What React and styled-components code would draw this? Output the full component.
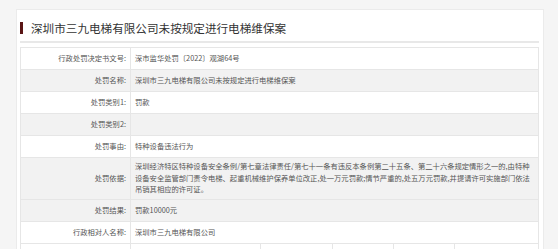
import React from 'react';
import styled, { createGlobalStyle } from 'styled-components';

const GlobalStyle = createGlobalStyle`
    body {
        margin: 0;
        background: #f5f5f5;
        font-family: "Noto Sans CJK SC", "Noto Sans", sans-serif;
    }
`

const Page = styled.div`
    padding: 9px 14px 0 16px;
`

const Card = styled.div`
    background: #fff;
    border: 1px solid #ebebeb;
    border-bottom: none;
    padding: 0 4px 0 3px;
`

const Header = styled.div`
    display: flex;
    align-items: center;
    gap: 8px;
    padding: 12px 0 7px 0;
    border-bottom: 2px solid #e8e8e8;
`

const TitleBar = styled.span`
    width: 3px;
    height: 12px;
    background: #5a1515;
`

const Title = styled.h1`
    margin: 0;
    font-size: 11.6px;
    line-height: 12px;
    font-weight: normal;
    color: #333;
    white-space: nowrap;
`

const Table = styled.div`
    margin-top: 4px;
    border: 1px solid #e6e6e6;
    border-bottom: none;
    font-size: 7.3px;
    line-height: 11.7px;
    color: #555;
`

const Row = styled.div`
    display: grid;
    grid-template-columns: 110px 1fr;
    min-height: 21px;
    background: ${props => props.shaded ? '#f2f2f2' : '#fff'};
    border-bottom: 1px solid #e6e6e6;
`

const Label = styled.div`
    display: flex;
    align-items: center;
    justify-content: flex-end;
    padding: 3px 4px 3px 0;
    border-right: 1px solid #e6e6e6;
    white-space: nowrap;
`

const Value = styled.div`
    display: flex;
    align-items: center;
    padding: 3px 4px;
    white-space: nowrap;
    overflow: hidden;
`

const SubRow = styled.div`
    display: grid;
    grid-template-columns: 110px 130px 72px 61px 61px 1fr;
    height: 21px;
    background: #fff;
    border-bottom: 1px solid #e6e6e6;
`

const SubCell = styled.div`
    border-right: 1px solid #e6e6e6;
    &:last-child {
        border-right: none;
    }
`

const rows = [
    { label: '行政处罚决定书文号:', value: '深市监华处罚〔2022〕观湖64号' },
    { label: '处罚名称:', value: '深圳市三九电梯有限公司未按规定进行电梯维保案', shaded: true },
    { label: '处罚类别1:', value: '罚款' },
    { label: '处罚类别2:', value: '', shaded: true },
    { label: '处罚事由:', value: '特种设备违法行为' },
    {
        label: '处罚依据:',
        value: [
            '深圳经济特区特种设备安全条例/第七章法律责任/第七十一条有违反本条例第二十五条、第二十六条规定情形之一的,由特种',
            '设备安全监管部门责令电梯、起重机械维护保养单位改正,处一万元罚款;情节严重的,处五万元罚款,并提请许可实施部门依法',
            '吊销其相应的许可证。',
        ],
        shaded: true,
    },
    { label: '处罚结果:', value: '罚款10000元', shaded: true },
    { label: '行政相对人名称:', value: '深圳市三九电梯有限公司' },
];

export default function App() {
    return (
        <Page>
            <GlobalStyle />
            <Card>
                <Header>
                    <TitleBar />
                    <Title>深圳市三九电梯有限公司未按规定进行电梯维保案</Title>
                </Header>
                <Table>
                    {rows.map(row => (
                        <Row key={row.label} shaded={row.shaded}>
                            <Label>{row.label}</Label>
                            <Value>
                                {Array.isArray(row.value)
                                    ? <div>{row.value.map((line, i) => <div key={i}>{line}</div>)}</div>
                                    : row.value}
                            </Value>
                        </Row>
                    ))}
                    <SubRow>
                        {[0, 1, 2, 3, 4, 5].map(i => <SubCell key={i} />)}
                    </SubRow>
                </Table>
            </Card>
        </Page>
    );
}
